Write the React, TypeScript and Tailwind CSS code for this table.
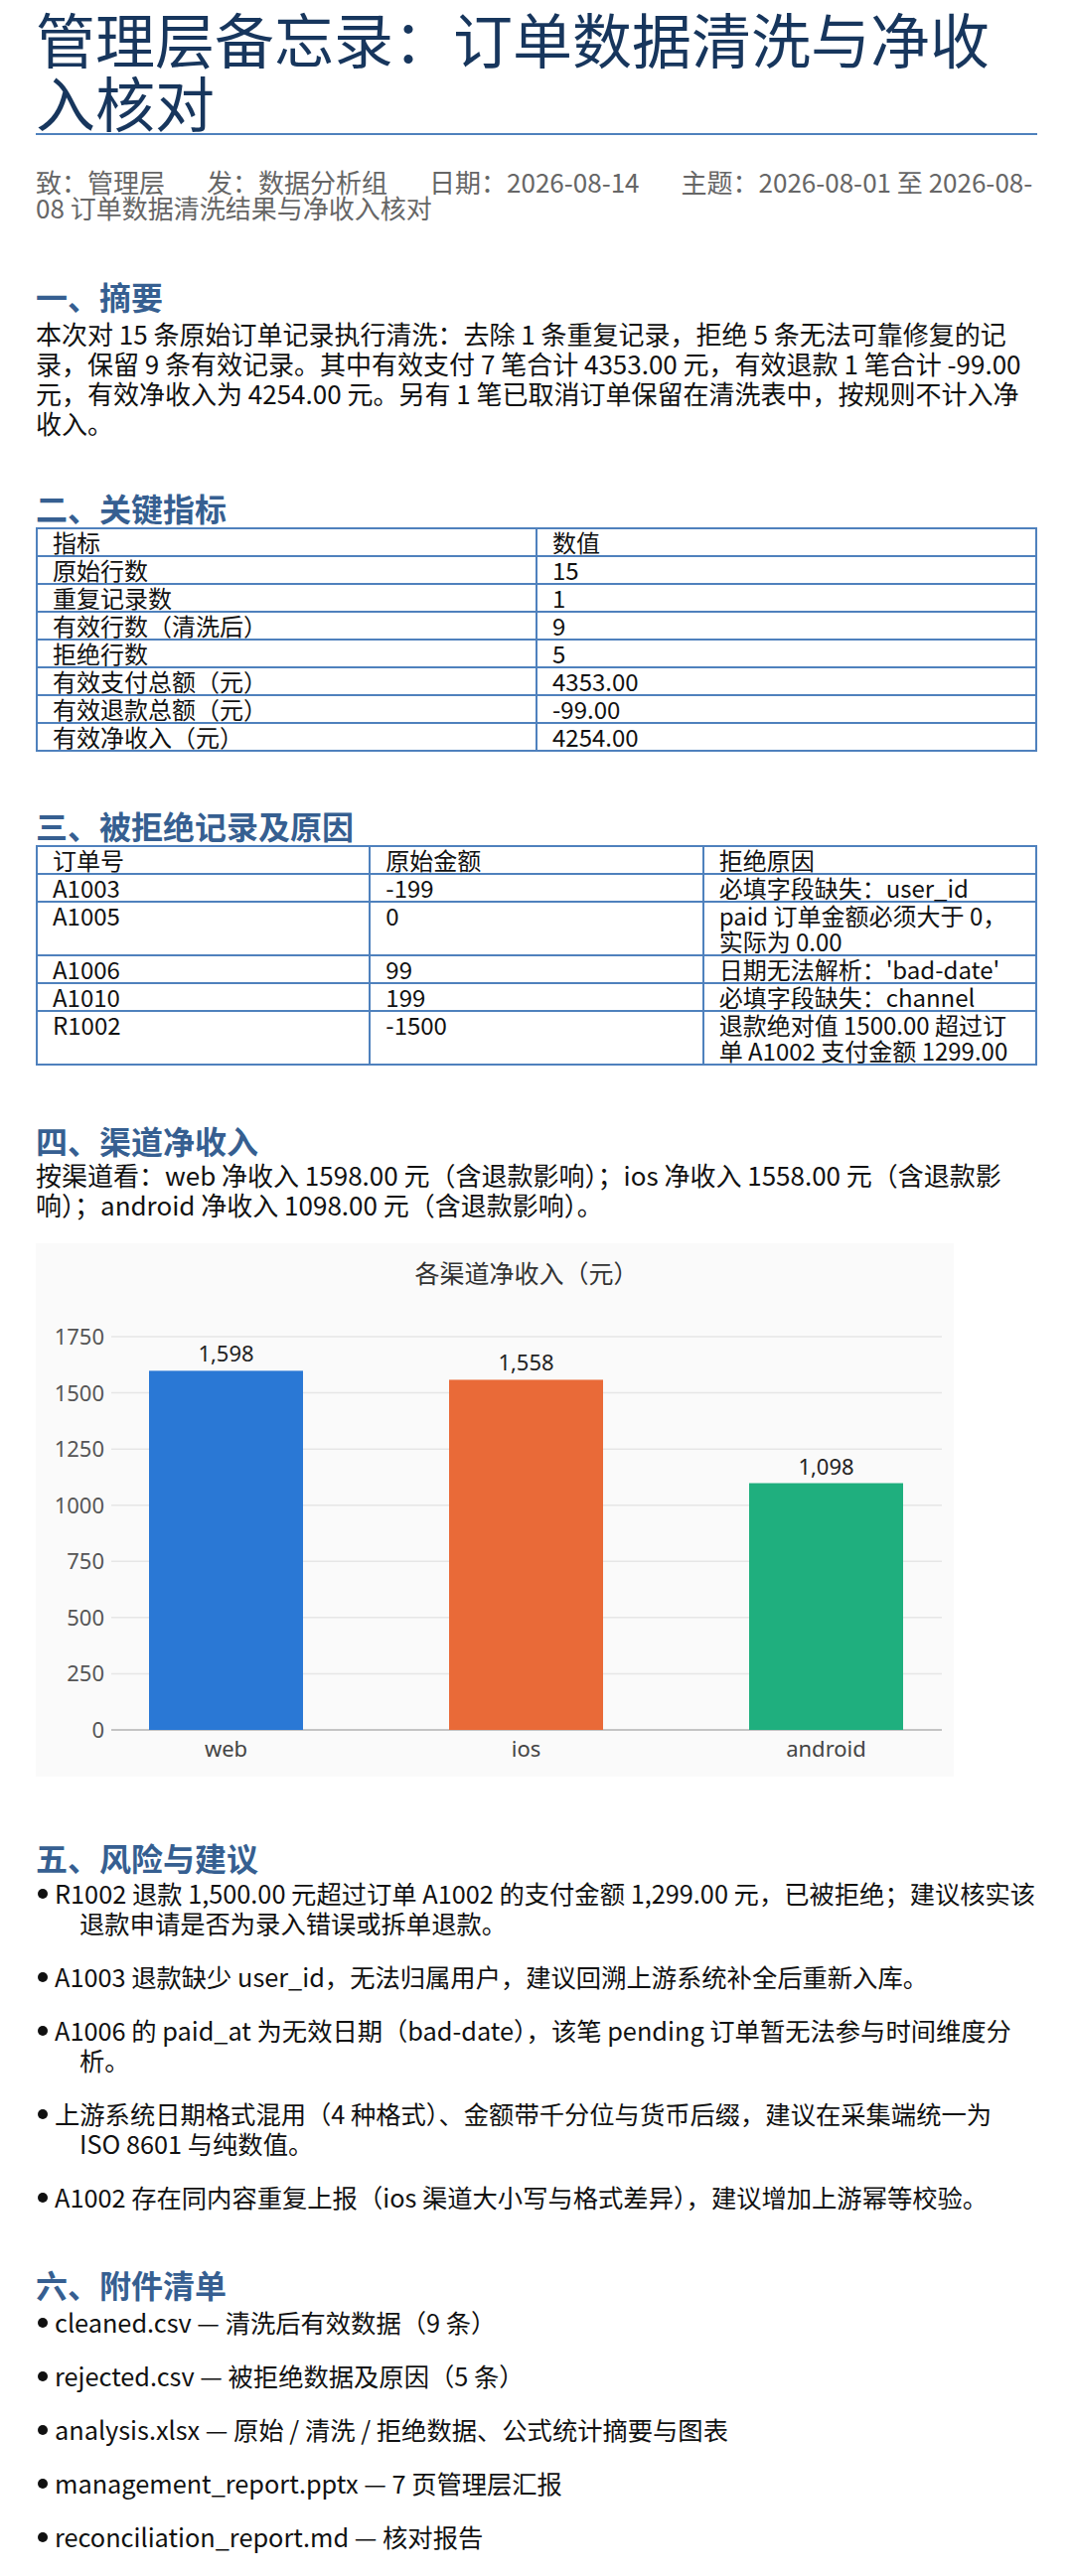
import type { ReactNode } from 'react';

const metrics = [
  ['指标', '数值'],
  ['原始行数', '15'],
  ['重复记录数', '1'],
  ['有效行数（清洗后）', '9'],
  ['拒绝行数', '5'],
  ['有效支付总额（元）', '4353.00'],
  ['有效退款总额（元）', '-99.00'],
  ['有效净收入（元）', '4254.00'],
];

const rejected = [
  ['订单号', '原始金额', '拒绝原因'],
  ['A1003', '-199', '必填字段缺失：user_id'],
  ['A1005', '0', 'paid 订单金额必须大于 0，实际为 0.00'],
  ['A1006', '99', "日期无法解析：'bad-date'"],
  ['A1010', '199', '必填字段缺失：channel'],
  ['R1002', '-1500', '退款绝对值 1500.00 超过订单 A1002 支付金额 1299.00'],
];

const risks = [
  'R1002 退款 1,500.00 元超过订单 A1002 的支付金额 1,299.00 元，已被拒绝；建议核实该退款申请是否为录入错误或拆单退款。',
  'A1003 退款缺少 user_id，无法归属用户，建议回溯上游系统补全后重新入库。',
  'A1006 的 paid_at 为无效日期（bad-date），该笔 pending 订单暂无法参与时间维度分析。',
  '上游系统日期格式混用（4 种格式）、金额带千分位与货币后缀，建议在采集端统一为 ISO 8601 与纯数值。',
  'A1002 存在同内容重复上报（ios 渠道大小写与格式差异），建议增加上游幂等校验。',
];

const attachments = [
  'cleaned.csv — 清洗后有效数据（9 条）',
  'rejected.csv — 被拒绝数据及原因（5 条）',
  'analysis.xlsx — 原始 / 清洗 / 拒绝数据、公式统计摘要与图表',
  'management_report.pptx — 7 页管理层汇报',
  'reconciliation_report.md — 核对报告',
];

const channels = [
  { name: 'web', value: 1598, color: '#2a78d5', x: 114 },
  { name: 'ios', value: 1558, color: '#e96a38', x: 416 },
  { name: 'android', value: 1098, color: '#1faf7e', x: 718 },
];

// y of the zero line and px per yuan, measured off the reference chart
const ZERO = 490;
const SCALE = 0.2263;
const ticks = [0, 250, 500, 750, 1000, 1250, 1500, 1750];

function Heading({ children, className = '' }: { children: ReactNode; className?: string }) {
  return <h2 className={`text-[32px] leading-[38px] font-bold text-[#365f91] ${className}`}>{children}</h2>;
}

function Cell({ children, head, className = '' }: { children: ReactNode; head?: boolean; className?: string }) {
  const Tag = head ? 'th' : 'td';
  return (
    <Tag className={`border-2 border-[#4f81bd] px-[15px] py-0 align-top text-left font-normal text-[24px] leading-[26px] ${className}`}>
      {children}
    </Tag>
  );
}

function Bullet({ children }: { children: ReactNode }) {
  return (
    <li className="pl-[44px] [text-indent:-42px] text-[25.3px] leading-[30px]">
      <span className="mr-[7px] inline-block h-[10px] w-[10px] rounded-full bg-[#111] align-[5px]" />
      {children}
    </li>
  );
}

function ChannelChart() {
  return (
    <svg width="924" height="537" viewBox="0 0 924 537" className="block bg-[#fafafa]">
      <text x="494" y="40" textAnchor="middle" fontSize="25" fill="#333" fontFamily="'Noto Sans', 'Noto Sans CJK SC', sans-serif">
        各渠道净收入（元）
      </text>
      {ticks.map((t) => {
        const y = ZERO - t * SCALE;
        return (
          <g key={t}>
            <line x1="76" x2="912" y1={y} y2={y} stroke={t === 0 ? '#c4c4c4' : '#e6e6e6'} strokeWidth={t === 0 ? 2 : 1.5} />
            <text x="69" y={y + 8} textAnchor="end" fontSize="22" fill="#555" fontFamily="'Noto Sans', sans-serif">
              {t}
            </text>
          </g>
        );
      })}
      {channels.map((c) => {
        const top = ZERO - c.value * SCALE;
        return (
          <g key={c.name}>
            <rect x={c.x} y={top} width="155" height={ZERO - top} fill={c.color} />
            <text x={c.x + 77.5} y={top - 9} textAnchor="middle" fontSize="22" fill="#222" fontFamily="'Noto Sans', sans-serif">
              {c.value.toLocaleString('en-US')}
            </text>
            <text x={c.x + 77.5} y="517" textAnchor="middle" fontSize="22" fill="#444" fontFamily="'Noto Sans', sans-serif">
              {c.name}
            </text>
          </g>
        );
      })}
    </svg>
  );
}

export default function App() {
  return (
    <div className="w-[1080px] bg-white px-[36px] pt-[6px] pb-[28px] text-[#111] font-['Noto_Sans_CJK_SC','Noto_Sans',sans-serif]">
      <h1 className="text-[60px] leading-[64px] font-normal text-[#17365d] border-b-2 border-[#4f81bd]">
        管理层备忘录：订单数据清洗与净收入核对
      </h1>

      <p className="mt-[34px] text-[26px] leading-[26px] text-[#666]">
        <span className="mr-[42px]">致：管理层</span>
        <span className="mr-[42px]">发：数据分析组</span>
        <span className="mr-[42px]">日期：2026-08-14</span>
        <span>主题：2026-08-01 至 2026-08-<wbr />08 订单数据清洗结果与净收入核对</span>
      </p>

      <Heading className="mt-[57px]">一、摘要</Heading>
      <p className="mt-[4px] text-[26px] leading-[30px]">
        本次对 15 条原始订单记录执行清洗：去除 1 条重复记录，拒绝 5 条无法可靠修复的记录，保留 9 条有效记录。其中有效支付 7 笔合计 4353.00 元，有效退款 1 笔合计 -99.00 元，有效净收入为 4254.00 元。另有 1 笔已取消订单保留在清洗表中，按规则不计入净收入。
      </p>

      <Heading className="mt-[51px]">二、关键指标</Heading>
      <table className="mt-[1px] w-full table-fixed border-collapse">
        <tbody>
          {metrics.map(([k, v], i) => (
            <tr key={k}>
              <Cell head={i === 0} className="w-1/2">{k}</Cell>
              <Cell head={i === 0}>{v}</Cell>
            </tr>
          ))}
        </tbody>
      </table>

      <Heading className="mt-[55px]">三、被拒绝记录及原因</Heading>
      <table className="mt-[1px] w-full table-fixed border-collapse">
        <tbody>
          {rejected.map((row, i) => (
            <tr key={row[0]}>
              {row.map((c, j) => (
                <Cell key={j} head={i === 0} className="w-1/3">{c}</Cell>
              ))}
            </tr>
          ))}
        </tbody>
      </table>

      <Heading className="mt-[56px]">四、渠道净收入</Heading>
      <p className="mt-[1px] text-[26px] leading-[30px]">
        按渠道看：web 净收入 1598.00 元（含退款影响）；ios 净收入 1558.00 元（含退款影响）；android 净收入 1098.00 元（含退款影响）。
      </p>
      <div className="mt-[24px]">
        <ChannelChart />
      </div>

      <Heading className="mt-[62px]">五、风险与建议</Heading>
      <ul className="mt-[2px] flex flex-col gap-[24px]">
        {risks.map((r) => (
          <Bullet key={r}>{r}</Bullet>
        ))}
      </ul>

      <Heading className="mt-[54px]">六、附件清单</Heading>
      <ul className="mt-[4px] flex flex-col gap-[24px]">
        {attachments.map((a) => (
          <Bullet key={a}>{a}</Bullet>
        ))}
      </ul>
    </div>
  );
}
